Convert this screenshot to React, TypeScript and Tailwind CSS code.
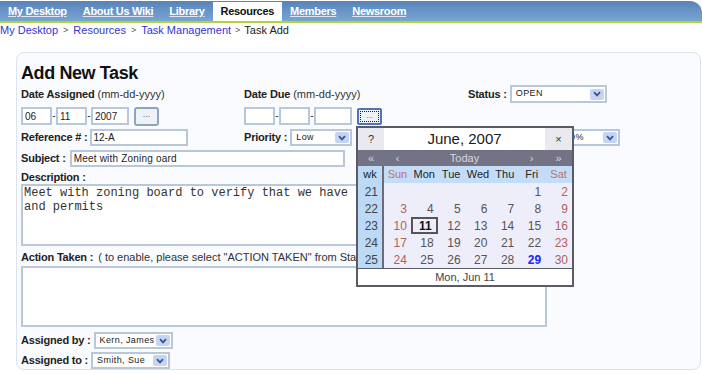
import type { ReactNode } from "react";

const tabs = ["My Desktop", "About Us Wiki", "Library", "Resources", "Members", "Newsroom"];

const weeks = [
  { wk: 21, days: [null, null, null, null, null, 1, 2] },
  { wk: 22, days: [3, 4, 5, 6, 7, 8, 9] },
  { wk: 23, days: [10, 11, 12, 13, 14, 15, 16] },
  { wk: 24, days: [17, 18, 19, 20, 21, 22, 23] },
  { wk: 25, days: [24, 25, 26, 27, 28, 29, 30] },
];

const dayNames = ["Sun", "Mon", "Tue", "Wed", "Thu", "Fri", "Sat"];

function Label({ children }: { children: ReactNode }) {
  return <span className="whitespace-nowrap text-[11px] font-bold tracking-[-0.2px] text-[#222]">{children}</span>;
}

function Input({ value = "", className = "" }: { value?: string; className?: string }) {
  return (
    <div className={`flex h-full items-center border-2 border-[#b8c7da] bg-white pl-[2px] text-[10px] text-[#222] ${className}`}>
      {value}
    </div>
  );
}

function Select({ value, className = "" }: { value: string; className?: string }) {
  return (
    <div className={`flex h-full items-center justify-between border-2 border-[#b8c7da] bg-white pl-[4px] pr-[1px] text-[9px] tracking-[0.4px] text-[#222] ${className}`}>
      <span className="whitespace-nowrap">{value}</span>
      <span className="flex h-[11px] w-[14px] items-center justify-center rounded-[2px] bg-[#c5d4f2]">
        <svg width="8" height="6" viewBox="0 0 8 6">
          <path d="M1 1.2 L4 4.4 L7 1.2" fill="none" stroke="#34558f" strokeWidth="1.7" />
        </svg>
      </span>
    </div>
  );
}

function Dash() {
  return <span className="w-[4px] text-center text-[10px] leading-none text-[#333]">-</span>;
}

function Calendar() {
  return (
    <div className="absolute left-[339px] top-[73px] w-[218px] border-2 border-[#5b5b66] bg-[#eeeefa] text-[12px] text-[#555]">
      <div className="flex h-[22px] items-center">
        <div className="flex h-full w-[26px] items-center justify-center bg-[#e9e9ef] text-[11px] text-[#333]">?</div>
        <div className="flex h-full flex-1 items-center justify-center bg-white text-[15px] text-[#1a1a1a]">June, 2007</div>
        <div className="flex h-full w-[27px] items-center justify-center bg-[#e9e9ef] text-[11px] text-[#333]">×</div>
      </div>
      <div className="flex h-[16px] items-center bg-[#737385] text-[11px] text-[#d6d6e2]">
        <div className="w-[26px] text-center">«</div>
        <div className="w-[27px] text-center">‹</div>
        <div className="flex-1 text-center">Today</div>
        <div className="w-[27px] text-center">›</div>
        <div className="w-[27px] text-center">»</div>
      </div>
      <div className="grid grid-cols-[26px_repeat(7,1fr)]">
        <div className="flex h-[17px] items-center justify-center border-r-2 border-[#6b6b7a] bg-[#bcd9f6] text-[11px] text-[#222]">wk</div>
        {dayNames.map((d, i) => (
          <div
            key={d}
            className={`flex h-[17px] items-center justify-center bg-[#c3ddf8] text-[11px] ${i === 0 || i === 6 ? "text-[#c07070]" : "text-[#222]"}`}
          >
            {d}
          </div>
        ))}
        {weeks.map((w) => (
          <>
            <div key={`wk${w.wk}`} className="flex h-[17px] items-center justify-end border-r-2 border-[#6b6b7a] bg-[#bcd9f6] pr-[4px] text-[#444]">
              {w.wk}
            </div>
            {w.days.map((d, i) => {
              const weekend = i === 0 || i === 6;
              const today = d === 11;
              const special = d === 29;
              return (
                <div
                  key={`${w.wk}-${i}`}
                  className={`flex h-[17px] items-center justify-end pr-[4px] ${
                    today
                      ? "border-2 border-[#555] font-bold text-[#111]"
                      : special
                        ? "font-bold text-[#2424ff]"
                        : weekend
                          ? "text-[#b35f5f]"
                          : "text-[#555]"
                  }`}
                >
                  {d ?? ""}
                </div>
              );
            })}
          </>
        ))}
      </div>
      <div className="flex h-[17px] items-center justify-center border-t border-[#5b5b66] bg-white text-[11px] text-[#444]">
        Mon, Jun 11
      </div>
    </div>
  );
}

export default function App() {
  return (
    <div className="h-[374px] w-[702px] overflow-hidden bg-white font-['Liberation_Sans',Arial,sans-serif] text-[#222]">
      {/* top nav */}
      <div className="pt-[1px]">
        <div className="flex h-[22px] rounded-tr-[12px] border-b-2 border-[#b3d23c] bg-linear-to-b from-[#5883b9] to-[#78a6d2]">
          {tabs.map((t) => (
            <div
              key={t}
              className={`flex items-center px-2 text-[11px] font-bold tracking-[-0.3px] ${
                t === "Resources" ? "mt-[1px] bg-white text-[#111]" : "text-white underline decoration-[#dfe8f3]"
              }`}
            >
              {t}
            </div>
          ))}
        </div>
      </div>

      {/* breadcrumb */}
      <div className="flex h-[14px] items-center text-[11px] leading-[14px]">
        <span className="text-[#3434d4]">My Desktop</span>
        <span className="mx-[5px] text-[9px] text-[#555]">&gt;</span>
        <span className="text-[#3434d4]">Resources</span>
        <span className="mx-[5px] text-[9px] text-[#555]">&gt;</span>
        <span className="text-[#3434d4]">Task Management</span>
        <span className="mx-[4px] text-[9px] text-[#555]">&gt;</span>
        <span className="text-[#222]">Task Add</span>
      </div>

      {/* panel */}
      <div className="relative ml-[16px] mt-[15px] h-[318px] w-[685px] rounded-[8px] border border-[#dce3ee] bg-[#f9fbfe] pl-[4px] pt-[8px]">
        <h1 className="h-[24px] text-[18px] font-bold leading-[24px] tracking-[-0.4px] text-[#111]">Add New Task</h1>

        <div className="flex h-[18px] items-center">
          <div className="w-[223px] text-[11px]">
            <Label>Date Assigned</Label> <span className="text-[#333]">(mm-dd-yyyy)</span>
          </div>
          <div className="w-[224px] text-[11px]">
            <Label>Date Due</Label> <span className="text-[#333]">(mm-dd-yyyy)</span>
          </div>
          <Label>Status :</Label>
          <Select value="OPEN" className="ml-[3px] w-[97px]" />
        </div>

        <div className="mt-[4px] flex h-[18px] items-center">
          <div className="flex h-full w-[223px] items-center">
            <Input value="06" className="w-[31px]" />
            <Dash />
            <Input value="11" className="w-[31px]" />
            <Dash />
            <Input value="2007" className="w-[38px]" />
            <div className="ml-[5px] flex h-[19px] w-[25px] items-center justify-center rounded-[3px] border-2 border-[#8ea5c2] bg-[#eef2f7] pb-[3px] text-[9px] text-[#666]">
              ...
            </div>
          </div>
          <div className="flex h-full items-center">
            <Input className="w-[31px]" />
            <Dash />
            <Input className="w-[31px]" />
            <Dash />
            <Input className="w-[38px]" />
            <div className="ml-[5px] flex h-[17px] w-[25px] items-center justify-center rounded-[2px] border-2 border-[#4b76b2] bg-[#eef2f7] p-[1px]">
              <div className="flex h-full w-full items-end justify-center border border-dotted border-[#222] text-[8px] leading-[10px] text-[#555]">...</div>
            </div>
          </div>
        </div>

        <div className="mt-[4px] flex h-[17px] items-center">
          <div className="flex h-full w-[223px] items-center">
            <Label>Reference # :</Label>
            <Input value="12-A" className="ml-[2px] w-[98px]" />
          </div>
          <div className="flex h-full w-[224px] items-center">
            <Label>Priority :</Label>
            <Select value="Low" className="ml-[3px] w-[62px]" />
          </div>
          <Select value="0%" className="ml-[94px] w-[58px] pl-[6px]" />
        </div>

        <div className="mt-[4px] flex h-[17px] items-center">
          <Label>Subject :</Label>
          <Input value="Meet with Zoning oard" className="ml-[4px] w-[275px] tracking-[0.2px]" />
        </div>

        <div className="mt-[3px] flex h-[14px] items-center">
          <Label>Description :</Label>
        </div>
        <div className="h-[62px] w-[526px] border-2 border-[#b8c7da] bg-white px-[1px] font-['Liberation_Mono','Courier_New',monospace] text-[12px] leading-[14px] text-[#333]">
          <div className="w-[333px] overflow-hidden whitespace-pre">
            {"Meet with zoning board to verify that we have t\nand permits"}
          </div>
        </div>

        <div className="mt-[4px] flex h-[14px] items-center text-[11px]">
          <Label>Action Taken :</Label>
          <span className="ml-[5px] w-[258px] overflow-hidden whitespace-nowrap text-[#333]">( to enable, please select "ACTION TAKEN" from Status )</span>
        </div>
        <div className="mt-[2px] h-[61px] w-[526px] border-2 border-[#b8c7da] bg-white" />

        <div className="mt-[5px] flex h-[17px] items-center">
          <Label>Assigned by :</Label>
          <Select value="Kern, James" className="ml-[3px] w-[79px]" />
        </div>
        <div className="mt-[3px] flex h-[17px] items-center">
          <Label>Assigned to :</Label>
          <Select value="Smith, Sue" className="ml-[3px] w-[79px]" />
        </div>

        <Calendar />
      </div>
    </div>
  );
}
